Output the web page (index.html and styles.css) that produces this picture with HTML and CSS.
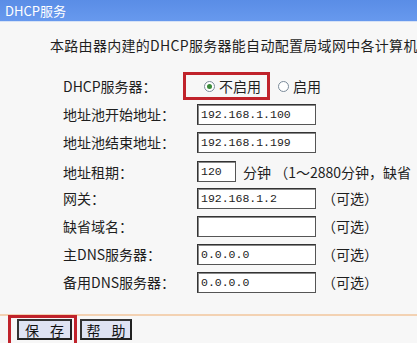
FILE: index.html
```html
<!DOCTYPE html>
<html lang="zh-CN">
<head>
<meta charset="utf-8">
<title>DHCP服务</title>
<link rel="stylesheet" href="styles.css">
</head>
<body>
<div class="titlebar">DHCP服务</div>
<div class="content">
  <p class="intro">本路由器内建的DHCP服务器能自动配置局域网中各计算机</p>
  <div class="form">
    <div class="label">DHCP服务器：</div>
    <div class="field radios">
      <span class="mark mark-radio"></span>
      <span class="radio checked"></span><span class="rtext">不启用</span>
      <span class="radio second"></span><span class="rtext">启用</span>
    </div>

    <div class="label">地址池开始地址：</div>
    <div class="field"><span class="input">192.168.1.100</span></div>

    <div class="label">地址池结束地址：</div>
    <div class="field"><span class="input">192.168.1.199</span></div>

    <div class="label lease">地址租期：</div>
    <div class="field lease"><span class="input small">120</span><span class="note">分钟 （1～2880分钟，缺省</span></div>

    <div class="label">网关：</div>
    <div class="field"><span class="input">192.168.1.2</span><span class="opt">（可选）</span></div>

    <div class="label">缺省域名：</div>
    <div class="field"><span class="input"></span><span class="opt">（可选）</span></div>

    <div class="label">主DNS服务器：</div>
    <div class="field"><span class="input">0.0.0.0</span><span class="opt">（可选）</span></div>

    <div class="label">备用DNS服务器：</div>
    <div class="field"><span class="input">0.0.0.0</span><span class="opt">（可选）</span></div>
  </div>
</div>
<div class="footer">
  <span class="mark mark-save"></span>
  <button class="btn save">保 存</button>
  <button class="btn help">帮 助</button>
</div>
</body>
</html>
```
FILE: styles.css
```css
html, body {
  margin: 0;
  padding: 0;
  overflow: hidden;
}
body {
  width: 417px;
  height: 343px;
  background: #f7f7f7;
  font-family: "Noto Sans CJK SC", "Liberation Sans", sans-serif;
  font-size: 14px;
  color: #1e1e1e;
  position: relative;
}
.titlebar {
  height: 22px;
  line-height: 21px;
  background: linear-gradient(#5a8de6, #6799ee);
  color: #fff;
  font-size: 13px;
  padding-left: 5px;
  border-bottom: 1px solid #d6e2f6;
  box-sizing: border-box;
}
.content {
  padding-top: 13px;
}
.intro {
  margin: 0;
  padding-left: 50px;
  height: 20px;
  line-height: 20px;
  white-space: nowrap;
  letter-spacing: 0.3px;
}
.form {
  margin-top: 17px;
  padding-left: 63px;
  display: grid;
  grid-template-columns: 134px 1fr;
  grid-auto-rows: 28px;
}
.label, .field {
  display: flex;
  align-items: center;
  white-space: nowrap;
}
.field {
  position: relative;
}
.label.lease, .field.lease {
  margin-top: 3px;
}
.input {
  box-sizing: border-box;
  width: 119px;
  height: 21px;
  background: #fff;
  border: 1px solid #555;
  border-top-color: #333;
  border-left-color: #333;
  box-shadow: inset 1px 1px 0 #888;
  font-family: "Liberation Mono", "DejaVu Sans Mono", monospace;
  font-size: 11.5px;
  line-height: 19px;
  padding-left: 3px;
  color: #222;
  flex: none;
}
.input.small {
  width: 39px;
}
.note {
  margin-left: 7px;
}
.opt {
  margin-left: 6px;
}
.radios {
  padding-left: 7px;
}
.radio {
  box-sizing: border-box;
  width: 11px;
  height: 11px;
  border-radius: 50%;
  border: 1px solid #7a8a99;
  background: #fff;
  position: relative;
  flex: none;
}
.radio.checked::after {
  content: "";
  position: absolute;
  left: 2px;
  top: 2px;
  width: 5px;
  height: 5px;
  border-radius: 50%;
  background: #3a8a3a;
}
.rtext {
  margin-left: 4px;
}
.radio.second {
  margin-left: 17px;
}
.mark {
  position: absolute;
  border: 3px solid #c0232b;
  box-sizing: border-box;
  pointer-events: none;
}
.mark-radio {
  left: -14px;
  top: 0;
  width: 87px;
  height: 28px;
}
.footer {
  position: absolute;
  left: 0;
  right: 0;
  top: 314px;
  height: 29px;
  border-top: 2px solid #f3d2b3;
  display: flex;
  align-items: flex-start;
  padding: 3px 0 0 17px;
  gap: 8px;
  box-sizing: border-box;
}
.mark-save {
  left: 8px;
  top: -1px;
  width: 69px;
  height: 34px;
}
.btn {
  box-sizing: border-box;
  height: 21px;
  padding: 0 0 0 4px;
  margin: 0;
  background: #dfe3f3;
  border: 2px solid #333;
  border-right-color: #222;
  border-bottom-color: #222;
  font-family: "Noto Sans CJK SC", sans-serif;
  font-size: 14px;
  line-height: 16px;
  letter-spacing: 4px;
  color: #111;
  white-space: pre;
}
.btn.save {
  width: 55px;
}
.btn.help {
  width: 52px;
}
```
